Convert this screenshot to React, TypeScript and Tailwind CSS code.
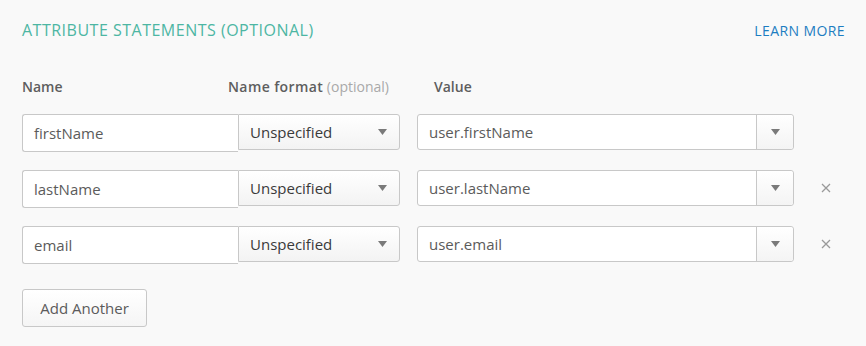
import React from 'react';

const rows = [
  { name: 'firstName', value: 'user.firstName', removable: false },
  { name: 'lastName', value: 'user.lastName', removable: true },
  { name: 'email', value: 'user.email', removable: true },
];

function Caret() {
  return (
    <svg width="9" height="6" viewBox="0 0 9 6" className="shrink-0">
      <path d="M0 0 L9 0 L4.5 6 Z" fill="#7a7a7a" />
    </svg>
  );
}

function RemoveIcon() {
  return (
    <svg width="10" height="10" viewBox="0 0 10 10">
      <path d="M1 1 L9 9 M9 1 L1 9" stroke="#9a9a9a" strokeWidth="1.3" />
    </svg>
  );
}

export default function App() {
  return (
    <div
      className="w-[866px] h-[346px] bg-[#f9f9f9] pl-[22px] pr-[21px] pt-[19px] text-[#5b5b5b] overflow-hidden"
      style={{ fontFamily: '"Open Sans", Lato, sans-serif' }}
    >
      {/* Section header */}
      <div className="flex items-center justify-between h-[22px]">
        <h2 className="text-[16px] text-[#4db6a3] tracking-[0.5px]">ATTRIBUTE STATEMENTS (OPTIONAL)</h2>
        <a className="text-[14px] text-[#1d7dc1] tracking-[0.4px]">LEARN MORE</a>
      </div>

      {/* Column labels */}
      <div className="flex items-center mt-[36px] h-[18px] text-[14px] font-semibold text-[#5e5e5e]">
        <div className="w-[206px]">Name</div>
        <div className="w-[206px]">
          <span className="tracking-[0.4px]">Name format</span>{' '}
          <span className="font-normal text-[#a9a9a9]">(optional)</span>
        </div>
        <div>Value</div>
      </div>

      {/* Attribute rows */}
      <div className="mt-[19px] flex flex-col gap-[18px]">
        {rows.map((row) => (
          <div key={row.name} className="flex items-start h-[38px]">
            <div className="w-[216px] h-[38px] bg-white border border-[#c8c8c8] border-r-0 rounded-l-[3px] flex items-center pl-[11px] text-[15px] text-[#5b5b5b]">
              {row.name}
            </div>
            <div className="w-[162px] h-[36px] bg-gradient-to-b from-white to-[#f3f3f3] border border-[#c8c8c8] rounded-r-[3px] flex items-center justify-between pl-[11px] pr-[12px] text-[15px] text-[#3a3a3a]">
              <span>Unspecified</span>
              <Caret />
            </div>
            <div className="ml-[17px] w-[377px] h-[36px] bg-white border border-[#c8c8c8] rounded-[3px] flex">
              <div className="flex-1 flex items-center pl-[11px] text-[15px] text-[#5b5b5b]">{row.value}</div>
              <div className="w-[37px] h-full border-l border-[#c8c8c8] bg-gradient-to-b from-white to-[#f4f4f4] rounded-r-[3px] flex items-center justify-center">
                <Caret />
              </div>
            </div>
            {row.removable && (
              <button className="ml-[27px] h-[36px] flex items-center">
                <RemoveIcon />
              </button>
            )}
          </div>
        ))}
      </div>

      <button className="mt-[25px] w-[125px] h-[38px] bg-gradient-to-b from-white to-[#f5f5f5] border border-[#c8c8c8] rounded-[3px] text-[15px] text-[#5b5b5b] flex items-center justify-center">
        Add Another
      </button>
    </div>
  );
}
